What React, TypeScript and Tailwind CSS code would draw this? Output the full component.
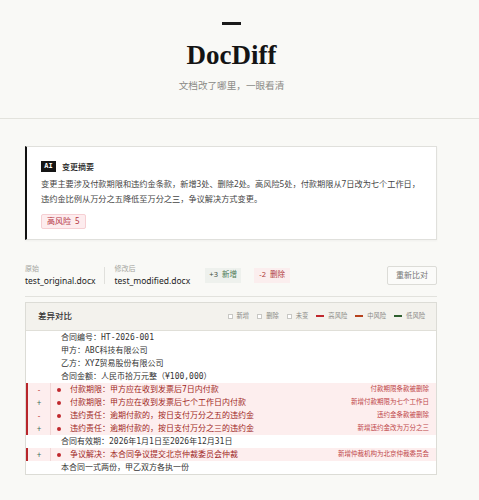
import React from 'react';

type Row = { type: 'same' | 'add' | 'del'; text: string; note?: string };

const rows: Row[] = [
  { type: 'same', text: '合同编号：HT-2026-001' },
  { type: 'same', text: '甲方：ABC科技有限公司' },
  { type: 'same', text: '乙方：XYZ贸易股份有限公司' },
  { type: 'same', text: '合同金额：人民币拾万元整（¥100,000）' },
  { type: 'del', text: '付款期限：甲方应在收到发票后7日内付款', note: '付款期限条款被删除' },
  { type: 'add', text: '付款期限：甲方应在收到发票后七个工作日内付款', note: '新增付款期限为七个工作日' },
  { type: 'del', text: '违约责任：逾期付款的，按日支付万分之五的违约金', note: '违约金条款被删除' },
  { type: 'add', text: '违约责任：逾期付款的，按日支付万分之三的违约金', note: '新增违约金改为万分之三' },
  { type: 'same', text: '合同有效期：2026年1月1日至2026年12月31日' },
  { type: 'add', text: '争议解决：本合同争议提交北京仲裁委员会仲裁', note: '新增仲裁机构为北京仲裁委员会' },
  { type: 'same', text: '本合同一式两份，甲乙双方各执一份' },
];

const sans = "font-['Noto_Sans','Noto_Sans_CJK_SC',sans-serif]";

const DiffRow: React.FC<{ row: Row }> = ({ row }) => {
  const changed = row.type !== 'same';
  return (
    <div
      className={`flex items-center h-[13px] border-l-2 ${
        changed ? 'bg-[#fdeeee] border-[#b8262b]' : 'bg-white border-transparent'
      }`}
    >
      <div
        className={`w-[23px] h-full flex items-center justify-center text-[8px] border-r ${
          changed ? 'border-[#f1d6d6]' : 'border-transparent'
        } ${row.type === 'add' ? 'text-[#3f6b5c]' : 'text-[#c24a4a]'}`}
      >
        {row.type === 'add' ? '+' : row.type === 'del' ? '-' : ''}
      </div>
      {changed && <span className="ml-[6px] w-[4px] h-[4px] rounded-full bg-[#c0282d]" />}
      <span
        className={`${changed ? 'ml-[9px] text-[#9e1f24]' : 'ml-[10px] text-[#333]'} text-[8px] leading-none whitespace-nowrap font-['DejaVu_Sans_Mono','Noto_Sans_CJK_SC',monospace]`}
      >
        {row.text}
      </span>
      {row.note && (
        <span className="ml-auto pr-[7px] text-[6.5px] leading-none text-[#c0474a] whitespace-nowrap">
          {row.note}
        </span>
      )}
    </div>
  );
};

export default function App() {
  return (
    <div className={`w-full min-h-[500px] bg-[#f9f9f6] ${sans}`}>
      {/* Header */}
      <header className="w-full border-b border-[#e3e3dd]">
        <div className="w-[463px] flex flex-col items-center pt-[22px] pb-[25px]">
          <div className="w-[19px] h-[3px] bg-[#1a1a1a]" />
          <h1 className="mt-[17px] text-[27px] leading-[27px] font-bold text-[#141414] font-['Liberation_Serif',serif]">
            DocDiff
          </h1>
          <p className="mt-[10px] text-[9.6px] leading-[14px] text-[#8a8a86]">文档改了哪里，一眼看清</p>
        </div>
      </header>

      <main className="w-[463px] pl-[25px] pr-[26px] pt-[27px]">
        {/* Summary card */}
        <section className="bg-white border border-[#e0e0dc] border-l-2 border-l-[#111] pl-[14px] pr-[14px] pt-[14px] pb-[9px] shadow-[0_1px_2px_rgba(0,0,0,0.04)]">
          <div className="flex items-center gap-[6px]">
            <span className="w-[15px] h-[11px] bg-[#151515] text-white text-[7px] font-bold leading-none flex items-center justify-center font-['DejaVu_Sans_Mono',monospace]">
              AI
            </span>
            <span className="text-[8px] leading-none font-medium text-[#222]">变更摘要</span>
          </div>
          <p className="mt-[4px] text-[8.2px] leading-[15px] text-[#444]">
            变更主要涉及付款期限和违约金条款，新增3处、删除2处。高风险5处，付款期限从7日改为七个工作日，
            <br />
            违约金比例从万分之五降低至万分之三，争议解决方式变更。
          </p>
          <div className="mt-[5px] inline-flex items-center h-[15px] px-[5px] gap-[4px] bg-[#fdecee] border border-[#f6cfd3] rounded-[2px] text-[8px] leading-none text-[#b3333e]">
            <span>高风险</span>
            <span>5</span>
          </div>
        </section>

        {/* File row */}
        <section className="mt-[24px] flex items-center pb-[10px] border-b border-[#e2e2dd]">
          <div className="flex flex-col">
            <span className="text-[7px] leading-[9px] text-[#a5a5a0]">原始</span>
            <span className="mt-[3px] text-[8.5px] leading-[10px] text-[#222]">test_original.docx</span>
          </div>
          <div className="w-px h-[17px] bg-[#e0e0dc] mx-[9px]" />
          <div className="flex flex-col">
            <span className="text-[7px] leading-[9px] text-[#a5a5a0]">修改后</span>
            <span className="mt-[3px] text-[8.5px] leading-[10px] text-[#222]">test_modified.docx</span>
          </div>
          <div className="ml-[15px] w-[36px] h-[15px] flex items-center justify-center gap-[4px] bg-[#eef1ed] text-[7.5px] leading-none">
            <span className="text-[#3c4f40]">+3</span>
            <span className="text-[#4d7a55]">新增</span>
          </div>
          <div className="ml-[13px] w-[36px] h-[15px] flex items-center justify-center gap-[4px] bg-[#fbeeee] text-[7.5px] leading-none">
            <span className="text-[#b03a3a]">-2</span>
            <span className="text-[#b03a3a]">删除</span>
          </div>
          <button className="ml-auto w-[50px] h-[19px] border border-[#dcdcd7] rounded-[2px] bg-[#fbfbf9] text-[8px] leading-none text-[#777]">
            重新比对
          </button>
        </section>

        {/* Diff table */}
        <section className="mt-[5px] bg-white border border-[#dcdcd6]">
          <div className="h-[28px] flex items-center pl-[12px] pr-[11px] bg-[#f3f2ed] border-b border-[#e0dfd8]">
            <span className="text-[8.5px] leading-none font-medium text-[#333]">差异对比</span>
            <div className="ml-auto flex items-center gap-[8px] text-[6.3px] leading-none text-[#8a8a86]">
              {['新增', '删除', '未变'].map((l) => (
                <span key={l} className="flex items-center gap-[4px]">
                  <span className="w-[5px] h-[5px] border border-[#c8c8c4] bg-white" />
                  {l}
                </span>
              ))}
              <span className="flex items-center gap-[4px]">
                <span className="w-[8px] h-[2px] bg-[#c0282d]" />
                高风险
              </span>
              <span className="flex items-center gap-[4px]">
                <span className="w-[8px] h-[2px] bg-[#b6421c]" />
                中风险
              </span>
              <span className="flex items-center gap-[4px]">
                <span className="w-[8px] h-[2px] bg-[#2f5f2f]" />
                低风险
              </span>
            </div>
          </div>
          <div className="flex flex-col">
            {rows.map((r, i) => (
              <DiffRow key={i} row={r} />
            ))}
          </div>
        </section>
      </main>
    </div>
  );
}
